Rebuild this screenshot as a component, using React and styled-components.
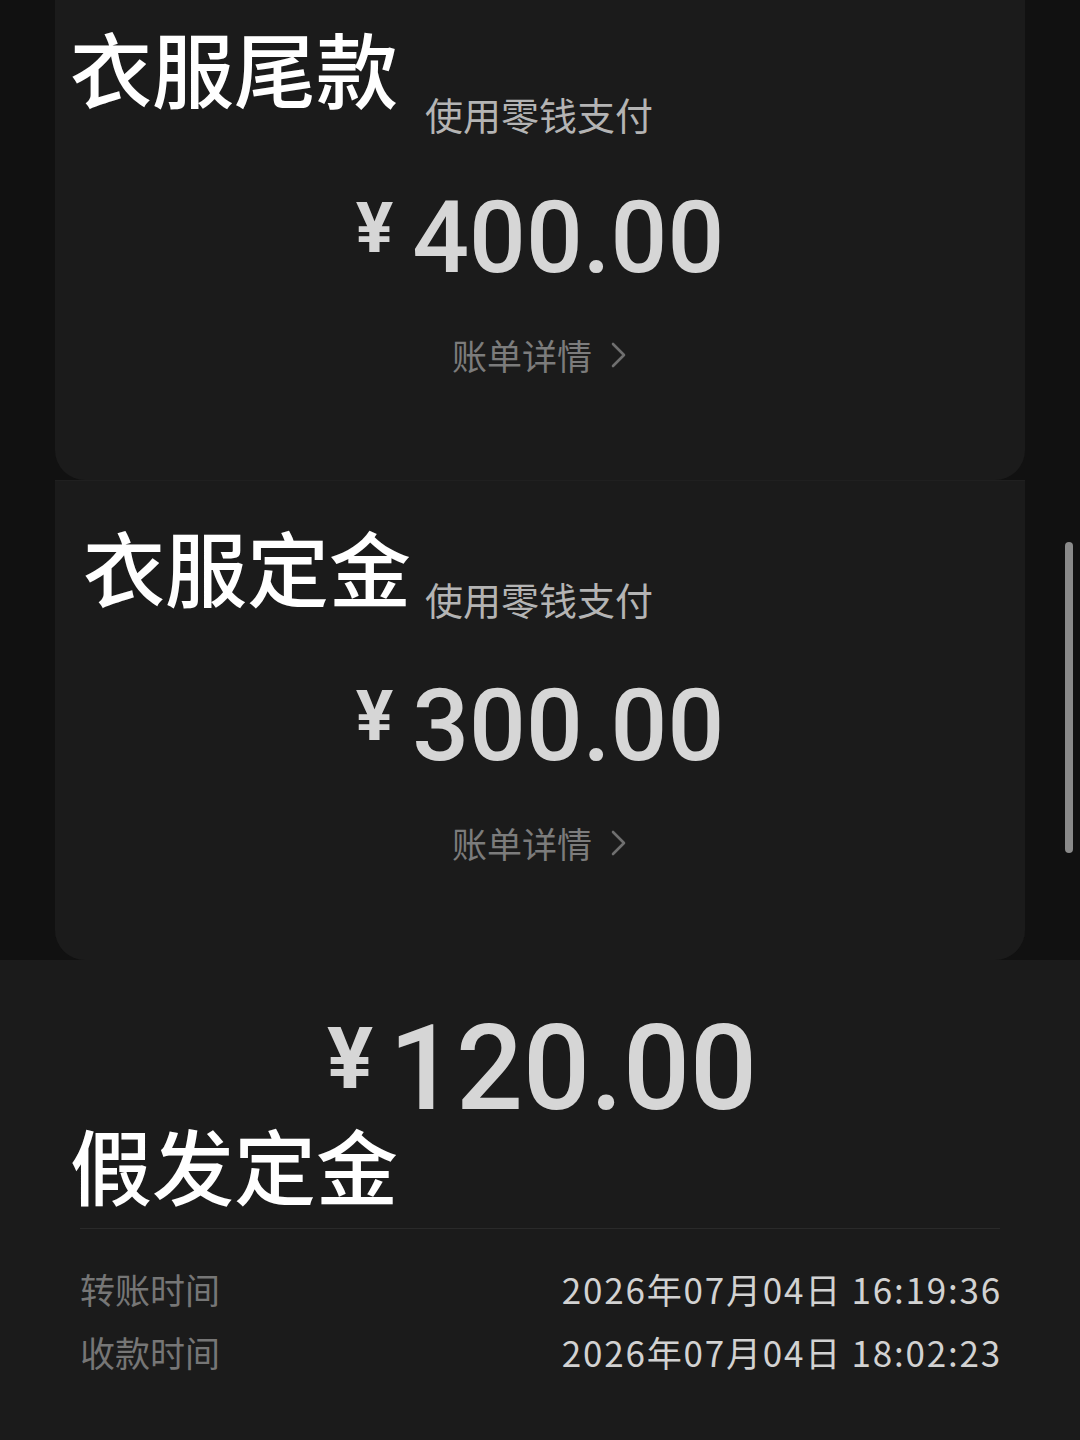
import styled, { createGlobalStyle } from "styled-components";

const GlobalStyle = createGlobalStyle`
  html, body {
    margin: 0;
    padding: 0;
    background: #111111;
  }
  body {
    font-family: "Noto Sans CJK SC", "Noto Sans", sans-serif;
  }
`;

const records = [
  { title: "衣服尾款", amount: "400.00", pad: 26, indent: 15, noteLeft: 27, noteTop: 69, amountTop: 55 },
  { title: "衣服定金", amount: "300.00", pad: 45, indent: 28, noteLeft: 14, noteTop: 55, amountTop: 58 },
];

const times = [
  { label: "转账时间", value: "2026年07月04日 16:19:36" },
  { label: "收款时间", value: "2026年07月04日 18:02:23" },
];

const Chevron = () => (
  <svg width="18" height="28" viewBox="0 0 18 28" fill="none">
    <path d="M3 3 L14 14 L3 25" stroke="#6f6f6f" strokeWidth="2.6" strokeLinecap="round" strokeLinejoin="round" />
  </svg>
);

const App = () => {
  return (
    <>
      <GlobalStyle />
      <PageStyled>
        {records.map((rec, idx) => (
          <SectionStyled key={rec.title}>
            <GutterStyled />
            <CardStyled $pad={rec.pad} $first={idx === 0}>
              <TitleRowStyled $indent={rec.indent}>
                <TitleStyled>{rec.title}</TitleStyled>
                <PayNoteStyled $top={rec.noteTop} $left={rec.noteLeft}>
                  使用零钱支付
                </PayNoteStyled>
              </TitleRowStyled>
              <AmountStyled $top={rec.amountTop}>
                <YenStyled>¥</YenStyled>
                <DigitsStyled>{rec.amount}</DigitsStyled>
              </AmountStyled>
              <DetailLinkStyled>
                账单详情
                <Chevron />
              </DetailLinkStyled>
            </CardStyled>
            <GutterStyled>{idx === 1 && <ScrollThumbStyled />}</GutterStyled>
          </SectionStyled>
        ))}
        <ReceiptStyled>
          <BigAmountStyled>
            <BigYenStyled>¥</BigYenStyled>
            <BigDigitsStyled>120.00</BigDigitsStyled>
          </BigAmountStyled>
          <ReceiptTitleStyled>假发定金</ReceiptTitleStyled>
          <DividerStyled />
          <TimeListStyled>
            {times.map((t) => (
              <TimeRowStyled key={t.label}>
                <TimeLabelStyled>{t.label}</TimeLabelStyled>
                <TimeValueStyled>{t.value}</TimeValueStyled>
              </TimeRowStyled>
            ))}
          </TimeListStyled>
        </ReceiptStyled>
      </PageStyled>
    </>
  );
};

const PageStyled = styled.main`
  width: 1080px;
  height: 1440px;
  overflow: hidden;
  background: #111111;
`;

const SectionStyled = styled.section`
  display: grid;
  grid-template-columns: 55px 970px 55px;
  height: 480px;
`;

const GutterStyled = styled.div`
  background: #111111;
`;

const CardStyled = styled.div`
  background: #1b1b1b;
  border-radius: 0 0 30px 30px;
  padding-top: ${(p) => p.$pad}px;
  box-shadow: ${(p) => (p.$first ? "none" : "inset 0 1px 0 #202020")};
  display: flex;
  flex-direction: column;
`;

const TitleRowStyled = styled.div`
  display: flex;
  align-items: flex-start;
  padding-left: ${(p) => p.$indent}px;
`;

const TitleStyled = styled.h2`
  margin: 0;
  font-size: 82px;
  line-height: 1;
  font-weight: 500;
  color: #ffffff;
`;

const PayNoteStyled = styled.span`
  margin-top: ${(p) => p.$top}px;
  margin-left: ${(p) => p.$left}px;
  font-size: 38px;
  line-height: 1;
  color: #b4b4b4;
  font-weight: 400;
`;

const AmountStyled = styled.div`
  display: flex;
  align-items: flex-start;
  justify-content: center;
  gap: 19px;
  margin-top: ${(p) => p.$top}px;
  color: #d6d6d6;
  font-family: Roboto, "Liberation Sans", sans-serif;
`;

const YenStyled = styled.span`
  font-size: 70px;
  line-height: 1;
  font-weight: 700;
  margin-top: 5px;
`;

const DigitsStyled = styled.span`
  font-size: 100px;
  line-height: 1;
  font-weight: 500;
`;

const DetailLinkStyled = styled.div`
  display: flex;
  align-items: center;
  justify-content: center;
  gap: 18px;
  margin-top: 49px;
  font-size: 35px;
  line-height: 1;
  color: #7c7c7c;
`;

const ScrollThumbStyled = styled.div`
  width: 8px;
  height: 311px;
  margin: 62px 0 0 40px;
  border-radius: 4px;
  background: #8a8a8a;
`;

const ReceiptStyled = styled.section`
  height: 480px;
  background: #1b1b1b;
  padding: 50px 80px 0 80px;
  box-sizing: border-box;
  display: flex;
  flex-direction: column;
`;

const BigAmountStyled = styled.div`
  display: flex;
  align-items: flex-start;
  justify-content: center;
  gap: 16px;
  color: #d6d6d6;
  font-family: Roboto, "Liberation Sans", sans-serif;
  padding-left: 4px;
`;

const BigYenStyled = styled.span`
  font-size: 86px;
  line-height: 1;
  font-weight: 700;
  margin-top: 6px;
`;

const BigDigitsStyled = styled.span`
  font-size: 118px;
  line-height: 1;
  font-weight: 500;
`;

const ReceiptTitleStyled = styled.h2`
  margin: -5px 0 0 -10px;
  font-size: 82px;
  line-height: 1;
  font-weight: 500;
  color: #ffffff;
`;

const DividerStyled = styled.hr`
  margin: 23px 0 0 0;
  border: none;
  height: 1px;
  background: #2a2a2a;
`;

const TimeListStyled = styled.div`
  margin-top: 28px;
  display: flex;
  flex-direction: column;
`;

const TimeRowStyled = styled.div`
  display: flex;
  justify-content: space-between;
  align-items: center;
  height: 63px;
  font-size: 35px;
`;

const TimeLabelStyled = styled.span`
  color: #767676;
`;

const TimeValueStyled = styled.span`
  color: #d2d2d2;
  letter-spacing: 1.8px;
  margin-right: -2px;
`;

export default App;
